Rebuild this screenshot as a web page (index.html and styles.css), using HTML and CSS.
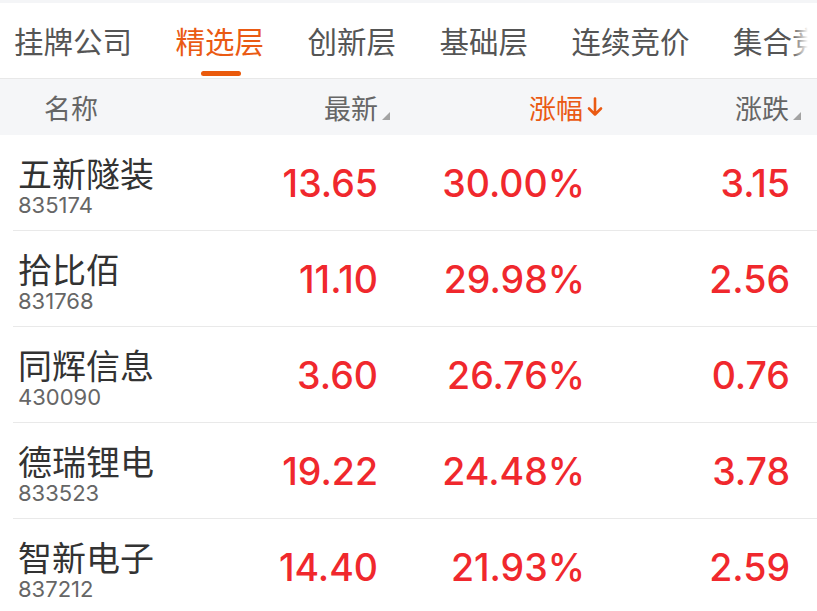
FILE: index.html
```html
<!DOCTYPE html>
<html lang="zh-CN">
<head>
<meta charset="utf-8">
<link rel="stylesheet" href="styles.css">
</head>
<body>
<div class="topstrip"></div>
<div class="tabbar">
  <nav class="tabs">
    <div class="tab">挂牌公司</div>
    <div class="tab active">精选层</div>
    <div class="tab">创新层</div>
    <div class="tab">基础层</div>
    <div class="tab">连续竞价</div>
    <div class="tab">集合竞价</div>
  </nav>
</div>
<div class="head">
  <div class="grid">
    <div class="hname">名称</div>
    <div class="hcell"><span>最新</span><svg class="tri" width="8" height="8" viewBox="0 0 8 8"><polygon points="8,0 8,8 0,8" fill="#a3a3a3"/></svg></div>
    <div class="hcell sorted"><span>涨幅</span><svg class="arrow" width="16" height="20" viewBox="0 0 16 20"><path d="M8 1.5V17.5M2 11.5L8 17.5L14 11.5" fill="none" stroke="#ea5a13" stroke-width="2.6" stroke-linecap="round" stroke-linejoin="round"/></svg></div>
    <div class="hcell"><span>涨跌</span><svg class="tri" width="8" height="8" viewBox="0 0 8 8"><polygon points="8,0 8,8 0,8" fill="#a3a3a3"/></svg></div>
  </div>
</div>
<div class="list">
  <div class="row grid">
    <div class="name"><div class="cn">五新隧装</div><div class="code">835174</div></div>
    <div class="num">13.65</div><div class="num">30.00%</div><div class="num">3.15</div>
  </div>
  <div class="row grid">
    <div class="name"><div class="cn">拾比佰</div><div class="code">831768</div></div>
    <div class="num">11.10</div><div class="num">29.98%</div><div class="num">2.56</div>
  </div>
  <div class="row grid">
    <div class="name"><div class="cn">同辉信息</div><div class="code">430090</div></div>
    <div class="num">3.60</div><div class="num">26.76%</div><div class="num">0.76</div>
  </div>
  <div class="row grid">
    <div class="name"><div class="cn">德瑞锂电</div><div class="code">833523</div></div>
    <div class="num">19.22</div><div class="num">24.48%</div><div class="num">3.78</div>
  </div>
  <div class="row grid">
    <div class="name"><div class="cn">智新电子</div><div class="code">837212</div></div>
    <div class="num">14.40</div><div class="num">21.93%</div><div class="num">2.59</div>
  </div>
</div>
</body>
</html>
```
FILE: styles.css
```css
html, body {
  margin: 0;
  padding: 0;
  background: #fff;
  overflow: hidden;
}
body {
  font-family: "Noto Sans CJK SC", "Noto Sans", sans-serif;
  width: 817px;
  height: 611px;
}
.topstrip {
  height: 3px;
  background: #f4f5f7;
}
.tabbar {
  height: 76px;
  box-sizing: border-box;
  border-bottom: 1px solid #e8e8e8;
}
.tabs {
  position: relative;
  display: flex;
  gap: 43.5px;
  padding-left: 14px;
  width: 808px;
  height: 75px;
  box-sizing: border-box;
  white-space: nowrap;
  overflow: hidden;
}
.tabs::after {
  content: "";
  position: absolute;
  right: 0;
  top: 0;
  width: 16px;
  height: 100%;
  background: linear-gradient(to right, rgba(255,255,255,0), #fff);
}
.tab {
  display: flex;
  flex-direction: column;
  align-items: center;
  flex: none;
  font-size: 29.5px;
  line-height: 29.5px;
  color: #555;
  padding-top: 23px;
}
.tab.active {
  color: #ea5a13;
}
.tab.active::after {
  content: "";
  display: block;
  width: 40px;
  height: 5px;
  border-radius: 3px;
  background: #ea5a0c;
  margin-top: 15.5px;
  margin-left: 3px;
}
.head {
  background: #f5f6f8;
  height: 56px;
  display: flex;
  align-items: center;
}
.grid {
  display: grid;
  grid-template-columns: 200px 165px 205px 206px;
  margin-left: 13px;
  width: 804px;
  box-sizing: border-box;
}
.head .grid {
  align-items: center;
}
.hname {
  font-size: 27px;
  line-height: 27px;
  color: #666;
  padding-left: 31px;
}
.hcell {
  display: flex;
  justify-content: flex-end;
  align-items: flex-end;
  font-size: 27px;
  line-height: 27px;
  color: #666;
  margin-right: -12px;
}
.hcell .tri {
  margin-left: 4px;
  margin-bottom: 1px;
}
.hcell.sorted {
  color: #ea5a13;
  align-items: center;
  margin-right: -20px;
}
.hcell.sorted .arrow {
  margin-left: 4px;
}
.row {
  height: 96px;
  border-bottom: 1px solid #e9e9e9;
  align-items: center;
}
.name {
  align-self: start;
  padding-left: 5px;
  padding-top: 21px;
}
.cn {
  font-size: 34px;
  line-height: 34px;
  color: #333;
}
.code {
  font-family: "Inter", "Liberation Sans", sans-serif;
  font-size: 22px;
  line-height: 22px;
  color: #666;
  margin-top: 4px;
}
.num {
  text-align: right;
  font-family: "Inter", "Liberation Sans", sans-serif;
  font-weight: 500;
  font-size: 37.5px;
  line-height: 40px;
  color: #f0282d;
  padding-top: 2px;
}
.num:nth-child(3) {
  margin-right: -2px;
}
.num:nth-child(4) {
  margin-right: -1px;
}
```
